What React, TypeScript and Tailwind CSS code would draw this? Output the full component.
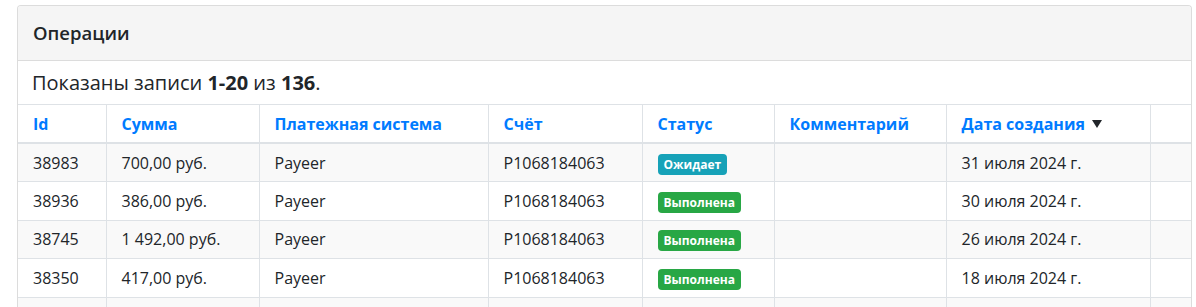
import React from 'react';

type Row = {
    id: string;
    amount: string;
    system: string;
    account: string;
    status: 'pending' | 'done';
    comment: string;
    date: string;
};

const rows: Row[] = [
    { id: '38983', amount: '700,00 руб.', system: 'Payeer', account: 'P1068184063', status: 'pending', comment: '', date: '31 июля 2024 г.' },
    { id: '38936', amount: '386,00 руб.', system: 'Payeer', account: 'P1068184063', status: 'done', comment: '', date: '30 июля 2024 г.' },
    { id: '38745', amount: '1 492,00 руб.', system: 'Payeer', account: 'P1068184063', status: 'done', comment: '', date: '26 июля 2024 г.' },
    { id: '38350', amount: '417,00 руб.', system: 'Payeer', account: 'P1068184063', status: 'done', comment: '', date: '18 июля 2024 г.' },
    { id: '38112', amount: '250,00 руб.', system: 'Payeer', account: 'P1068184063', status: 'done', comment: '', date: '12 июля 2024 г.' },
];

const columns = [
    { name: 'Id', width: 'w-[88px]' },
    { name: 'Сумма', width: 'w-[153px]' },
    { name: 'Платежная система', width: 'w-[229px]' },
    { name: 'Счёт', width: 'w-[154px]' },
    { name: 'Статус', width: 'w-[132px]' },
    { name: 'Комментарий', width: 'w-[172px]' },
    { name: 'Дата создания', width: 'w-[204px]', sorted: true },
    { name: '', width: '' },
];

function StatusBadge({ status }: { status: Row['status'] }) {
    if (status === 'pending') {
        return (
            <span className="inline-block rounded-[4px] bg-[#17a2b8] px-[6px] text-[12px] font-bold leading-[21px] text-white align-middle">
                Ожидает
            </span>
        );
    }
    return (
        <span className="inline-block rounded-[4px] bg-[#28a745] px-[6px] text-[12px] font-bold leading-[21px] text-white align-middle">
            Выполнена
        </span>
    );
}

export default function App() {
    return (
        <div className="bg-white pt-[5px] pl-[17px] text-[16px] text-[#212529] h-[307px] overflow-hidden" style={{ fontFamily: '"Open Sans", "Noto Sans", sans-serif' }}>
            <div className="w-[1175px] rounded-t-[4px] border border-b-0 border-[#dcdcdc] overflow-hidden">
                {/* Card header */}
                <div className="h-[55px] flex items-center bg-[#f5f5f5] border-b border-[#dcdcdc] px-[15px]">
                    <h3 className="text-[18.5px] font-semibold text-[#212529]">Операции</h3>
                </div>

                {/* Summary */}
                <div className="h-[44px] flex items-center px-[14px] text-[20px] border-b border-[#dee2e6]">
                    Показаны записи&nbsp;<b>1-20</b>&nbsp;из&nbsp;<b>136</b>.
                </div>

                {/* Table */}
                <table className="w-full table-fixed border-collapse">
                    <thead>
                        <tr className="h-[38px] border-b-2 border-[#dee2e6]">
                            {columns.map((col, i) => (
                                <th
                                    key={i}
                                    className={`${col.width} text-left font-bold px-[15px] py-0 text-[#007bff] ${i > 0 ? 'border-l border-[#dee2e6]' : ''}`}
                                >
                                    {col.name}
                                    {col.sorted && (
                                        <span className="inline-block ml-[7px] align-[2px] border-x-[5px] border-x-transparent border-t-[8px] border-t-[#212529]"></span>
                                    )}
                                </th>
                            ))}
                        </tr>
                    </thead>
                    <tbody>
                        {rows.map((row, idx) => (
                            <tr
                                key={row.id}
                                className={`h-[38.5px] border-b border-[#dee2e6] ${idx % 2 === 0 ? 'bg-[#f9f9f9]' : 'bg-white'}`}
                            >
                                <td className="px-[15px] py-0">{row.id}</td>
                                <td className="px-[15px] py-0 border-l border-[#dee2e6]">{row.amount}</td>
                                <td className="px-[15px] py-0 border-l border-[#dee2e6]">{row.system}</td>
                                <td className="px-[15px] py-0 border-l border-[#dee2e6]">{row.account}</td>
                                <td className="px-[15px] py-0 border-l border-[#dee2e6]">
                                    <StatusBadge status={row.status} />
                                </td>
                                <td className="px-[15px] py-0 border-l border-[#dee2e6]">{row.comment}</td>
                                <td className="px-[15px] py-0 border-l border-[#dee2e6]">{row.date}</td>
                                <td className="px-[15px] py-0 border-l border-[#dee2e6]"></td>
                            </tr>
                        ))}
                    </tbody>
                </table>
            </div>
        </div>
    );
}
